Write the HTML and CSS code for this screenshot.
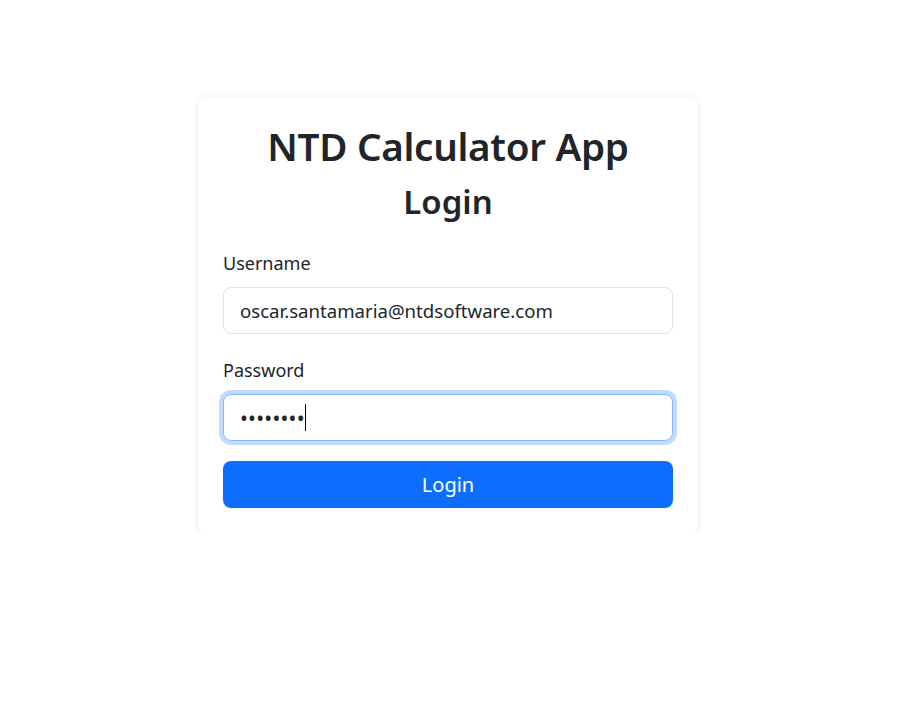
FILE: index.html
```html
<!DOCTYPE html>
<html lang="en">
<head>
<meta charset="utf-8">
<title>NTD Calculator App - Login</title>
<link rel="stylesheet" href="styles.css">
</head>
<body>
<main class="page">
  <section class="card">
    <h1 class="title">NTD Calculator App</h1>
    <h2 class="subtitle">Login</h2>
    <form class="form">
      <div class="field">
        <label class="label" for="username">Username</label>
        <input class="input" id="username" type="text" value="oscar.santamaria@ntdsoftware.com">
      </div>
      <div class="field field-last">
        <label class="label" for="password">Password</label>
        <div class="input input-focus"><span class="dots">••••••••</span><span class="caret"></span></div>
      </div>
      <button class="btn" type="button">Login</button>
    </form>
  </section>
</main>
</body>
</html>
```
FILE: styles.css
```css
* { box-sizing: border-box; }
html, body { margin: 0; padding: 0; background: #fff; }
body {
  font-family: "Noto Sans", "Open Sans", sans-serif;
  color: #212529;
}
.page {
  display: flex;
  justify-content: center;
  padding: 97px 4px 0 0;
}
.card {
  width: 500px;
  background: #fff;
  border-radius: 6px;
  box-shadow: 0 1px 6px rgba(0,0,0,0.09);
  padding: 25px;
}
.title {
  margin: 0;
  text-align: center;
  font-size: 38.6px;
  font-weight: 600;
  line-height: 48px;
  letter-spacing: -0.3px;
}
.subtitle {
  margin: 13px 0 0;
  text-align: center;
  font-size: 33px;
  font-weight: 600;
  line-height: 38px;
}
.form {
  margin-top: 27px;
  display: flex;
  flex-direction: column;
}
.field {
  display: flex;
  flex-direction: column;
  margin-bottom: 21px;
}
.field-last {
  margin-bottom: 20px;
}
.label {
  font-size: 18px;
  line-height: 30px;
  margin-bottom: 9px;
}
.input {
  display: flex;
  align-items: center;
  width: 100%;
  height: 47px;
  padding: 0 16px;
  font-family: inherit;
  font-size: 18.6px;
  color: #212529;
  background: #fff;
  border: 1px solid #dee2e6;
  border-radius: 8px;
  outline: none;
}
.input-focus {
  border-color: #86b7fe;
  box-shadow: 0 0 0 4px rgba(13,110,253,0.25);
}
.dots {
  font-size: 21px;
  letter-spacing: 0.2px;
  color: #212529;
}
.caret {
  display: inline-block;
  width: 1px;
  height: 27px;
  background: #000;
}
.btn {
  height: 47px;
  width: 100%;
  border: 0;
  border-radius: 8px;
  background: #0d6efd;
  color: #fff;
  font-family: inherit;
  font-size: 20px;
  cursor: pointer;
}
```
